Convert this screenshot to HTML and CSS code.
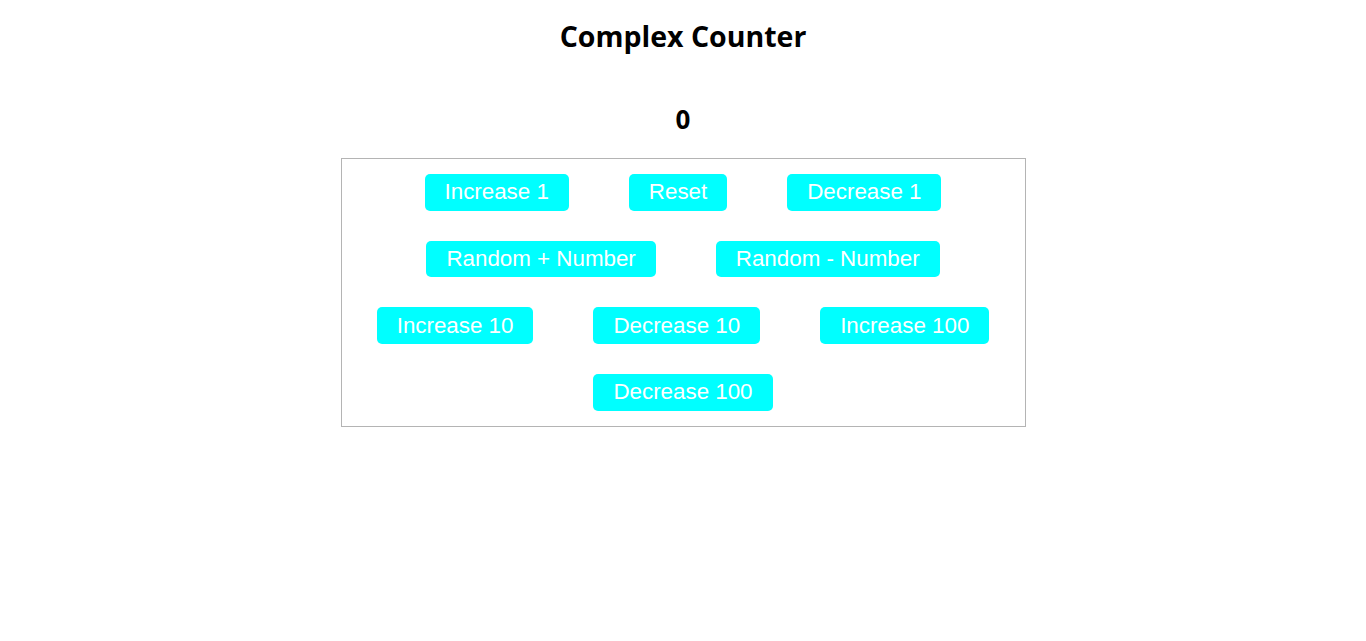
FILE: index.html
```html
<!DOCTYPE html>
<html lang="en">
<head>
<meta charset="utf-8">
<title>Complex Counter</title>
<link rel="stylesheet" href="styles.css">
</head>
<body>
<div class="app">
  <h1 class="title">Complex Counter</h1>
  <h2 class="count">0</h2>
  <div class="panel">
    <button class="btn">Increase 1</button>
    <button class="btn">Reset</button>
    <button class="btn">Decrease 1</button>
    <button class="btn">Random + Number</button>
    <button class="btn">Random - Number</button>
    <button class="btn">Increase 10</button>
    <button class="btn">Decrease 10</button>
    <button class="btn">Increase 100</button>
    <button class="btn">Decrease 100</button>
  </div>
</div>
</body>
</html>
```

FILE: styles.css
```css
html, body {
  margin: 0;
  padding: 0;
  background: #ffffff;
}

.app {
  display: flex;
  flex-direction: column;
  align-items: center;
  padding-top: 20px;
  font-family: "Open Sans", "Noto Sans", sans-serif;
  color: #000000;
}

.title {
  margin: 0;
  font-size: 28.5px;
  line-height: 32px;
  font-weight: 700;
  text-align: center;
}

.count {
  margin: 51px 0 0 0;
  font-size: 26px;
  line-height: 32px;
  font-weight: 700;
  text-align: center;
}

.panel {
  box-sizing: content-box;
  width: 50%;
  margin-top: 23px;
  border: 1px solid #b4b4b4;
  display: flex;
  flex-wrap: wrap;
  justify-content: center;
}

.btn {
  margin: 15px 30px;
  padding: 5.35px 20px;
  border: none;
  border-radius: 5px;
  background: #00ffff;
  color: #ffffff;
  font-family: "Liberation Sans", Arial, sans-serif;
  font-size: 22.35px;
  line-height: normal;
  cursor: pointer;
}
```
